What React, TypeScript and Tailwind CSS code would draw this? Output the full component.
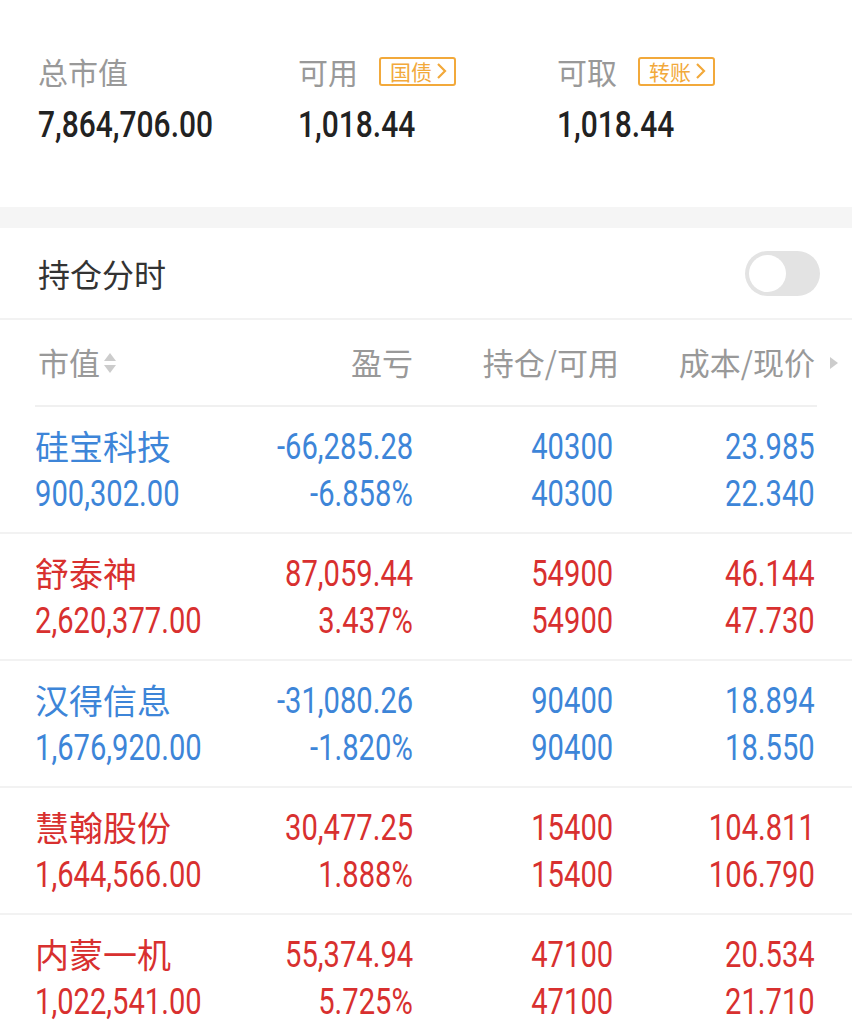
import React from "react"

const NUM = { fontFamily: "Roboto, 'Noto Sans CJK SC', sans-serif" }
const CJK = { fontFamily: "'Noto Sans CJK SC', 'Noto Sans', sans-serif" }

interface Holding {
  name: string
  value: string
  pnl: string
  pct: string
  qty: string
  cost: string
  price: string
  up: boolean
}

const HOLDINGS: Holding[] = [
  { name: "硅宝科技", value: "900,302.00", pnl: "-66,285.28", pct: "-6.858%", qty: "40300", cost: "23.985", price: "22.340", up: false },
  { name: "舒泰神", value: "2,620,377.00", pnl: "87,059.44", pct: "3.437%", qty: "54900", cost: "46.144", price: "47.730", up: true },
  { name: "汉得信息", value: "1,676,920.00", pnl: "-31,080.26", pct: "-1.820%", qty: "90400", cost: "18.894", price: "18.550", up: false },
  { name: "慧翰股份", value: "1,644,566.00", pnl: "30,477.25", pct: "1.888%", qty: "15400", cost: "104.811", price: "106.790", up: true },
  { name: "内蒙一机", value: "1,022,541.00", pnl: "55,374.94", pct: "5.725%", qty: "47100", cost: "20.534", price: "21.710", up: true },
]

// condensed digits: Roboto squeezed horizontally
const Num = ({ children, right }: { children: React.ReactNode; right?: boolean }) => (
  <span className={`inline-block scale-x-[0.81] whitespace-nowrap ${right ? "origin-right" : "origin-left"}`} style={NUM}>
    {children}
  </span>
)

const Badge = ({ text }: { text: string }) => (
  <span className="flex h-[29px] items-center rounded-[3px] border-2 border-[#f2a93b] pl-[9px] pr-[5px] text-[21px] leading-none text-[#f2a93b]">
    <span style={CJK}>{text}</span>
    <svg width="14" height="20" viewBox="0 0 14 20" className="ml-[3px]">
      <path d="M3 3l7 7-7 7" fill="none" stroke="#f2a93b" strokeWidth="2.2" />
    </svg>
  </span>
)

const SummaryItem = ({ label, value, badge }: { label: string; value: string; badge?: string }) => (
  <div className="flex flex-col">
    <div className="flex h-[30px] items-center gap-[21px]">
      <span className="text-[30px] leading-none text-[#999999]" style={CJK}>
        {label}
      </span>
      {badge && <Badge text={badge} />}
    </div>
    <span className="mt-[18px] text-[37px] font-medium leading-none text-[#222222]">
      <Num>{value}</Num>
    </span>
  </div>
)

const Toggle = () => (
  <div className="flex h-[45px] w-[75px] items-center rounded-full bg-[#e3e3e3] px-[4px]">
    <div className="h-[37px] w-[37px] rounded-full bg-white" />
  </div>
)

const SortArrows = () => (
  <svg width="16" height="26" viewBox="0 0 16 26" className="ml-[2px]">
    <path d="M8 3l6 8H2z" fill="#cccccc" />
    <path d="M8 23l6-8H2z" fill="#cccccc" />
  </svg>
)

const HoldingRow = ({ h }: { h: Holding }) => {
  const color = h.up ? "text-[#d8302f]" : "text-[#3d85d8]"
  return (
    <div className="border-b-2 border-[#f2f2f2]">
      <div className={`grid h-[125px] grid-cols-[200px_178px_200px_202px] content-center gap-y-[10px] pl-[35px] text-[36px] leading-[35px] ${color}`}>
        <span className="text-[34px]" style={CJK}>
          {h.name}
        </span>
        <span className="text-right"><Num right>{h.pnl}</Num></span>
        <span className="text-right"><Num right>{h.qty}</Num></span>
        <span className="text-right"><Num right>{h.cost}</Num></span>
        <span><Num>{h.value}</Num></span>
        <span className="text-right"><Num right>{h.pct}</Num></span>
        <span className="text-right"><Num right>{h.qty}</Num></span>
        <span className="text-right"><Num right>{h.price}</Num></span>
      </div>
    </div>
  )
}

export default function App() {
  return (
    <div className="min-h-[1024px] w-[852px] bg-white">
      <div className="grid h-[207px] grid-cols-[260px_259px_1fr] pl-[38px] pt-[56px]">
        <SummaryItem label="总市值" value="7,864,706.00" />
        <SummaryItem label="可用" value="1,018.44" badge="国债" />
        <SummaryItem label="可取" value="1,018.44" badge="转账" />
      </div>

      <div className="h-[21px] bg-[#f5f5f5]" />

      <div className="flex h-[92px] items-center justify-between border-b-2 border-[#f2f2f2] pl-[38px] pr-[32px]">
        <span className="text-[32px] text-[#333333]" style={CJK}>
          持仓分时
        </span>
        <Toggle />
      </div>

      <div className="px-[35px]">
        <div className="grid h-[87px] grid-cols-[200px_178px_206px_196px] items-center border-b-2 border-[#f0f0f0] text-[31px] text-[#999999]" style={CJK}>
          <span className="flex items-center pl-[3px]">
            市值
            <SortArrows />
          </span>
          <span className="text-right">盈亏</span>
          <span className="text-right">持仓/可用</span>
          <span className="relative text-right">
            成本/现价
            <svg width="10" height="14" viewBox="0 0 10 14" className="absolute right-[-24px] top-1/2 -translate-y-1/2">
              <path d="M1 1l8 6-8 6z" fill="#cccccc" />
            </svg>
          </span>
        </div>
      </div>

      {HOLDINGS.map((h) => (
        <HoldingRow key={h.name} h={h} />
      ))}
    </div>
  )
}
